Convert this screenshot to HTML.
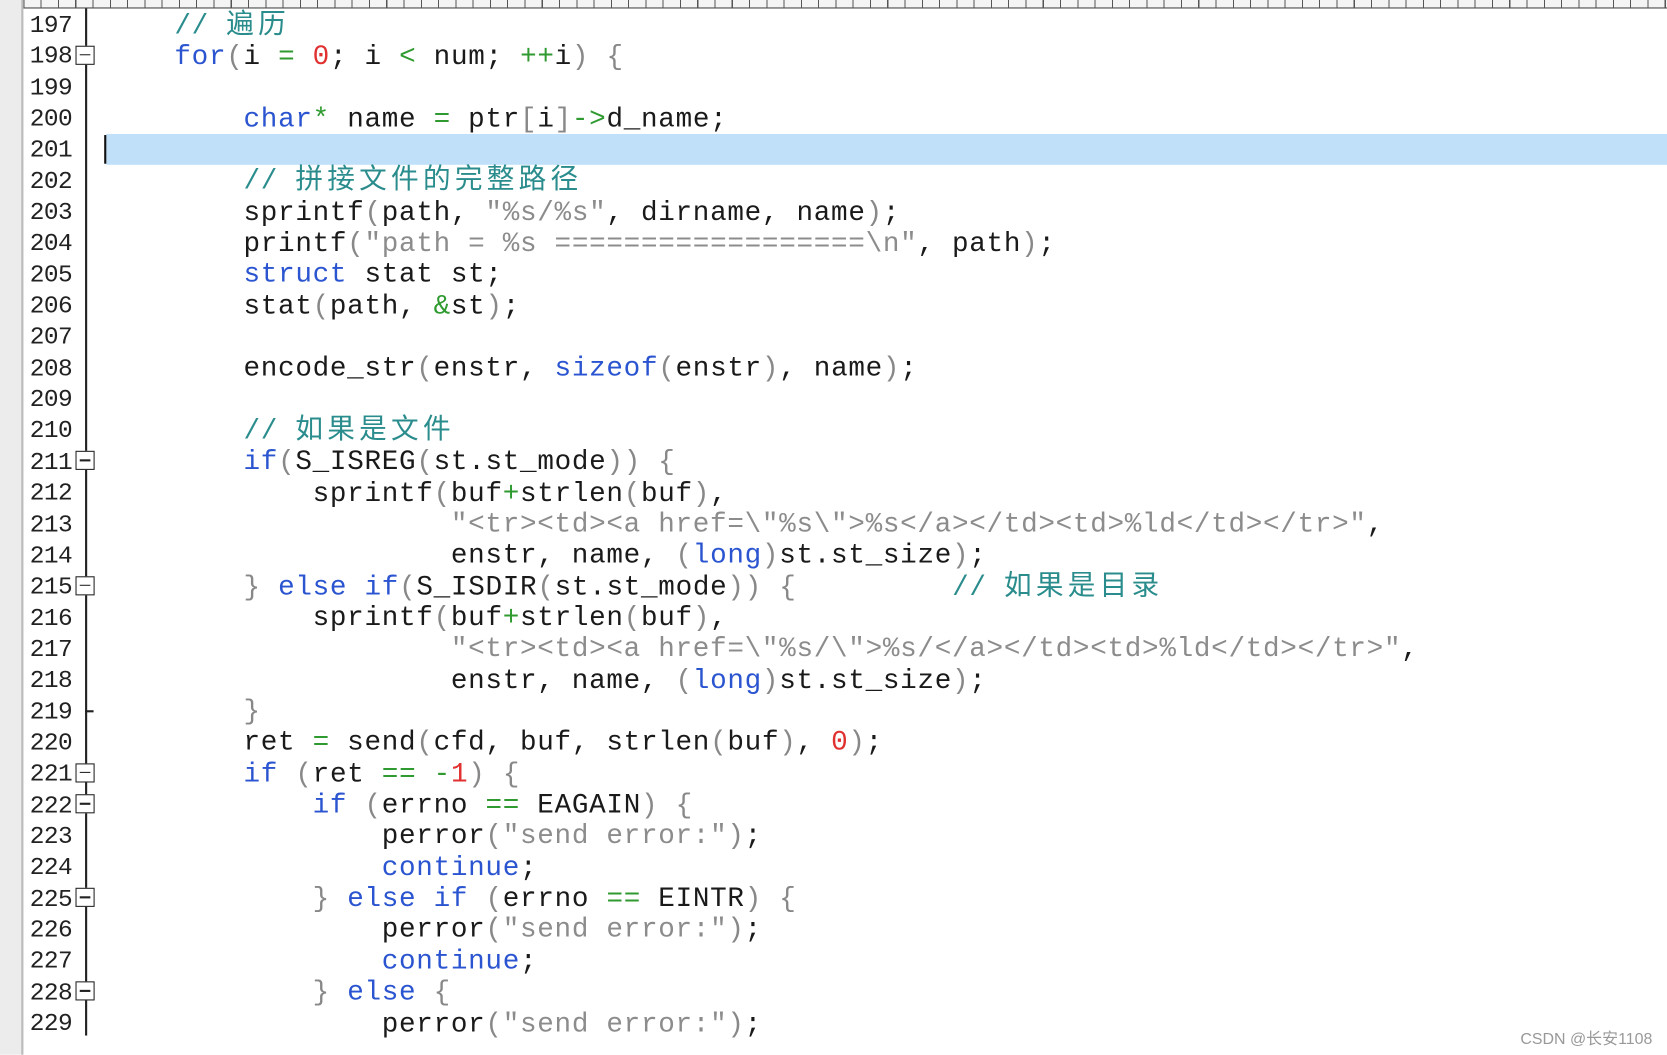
<!DOCTYPE html>
<html><head><meta charset="utf-8"><style>
html,body{margin:0;padding:0;background:#fff;width:1667px;height:1055px;overflow:hidden}
#w{position:absolute;left:0;top:0;width:1568px;height:992px;transform:scale(1.0632);transform-origin:0 0;background:#fff}
.ruler{position:absolute;left:22px;top:0;width:1546px;height:7px;background:#f4f4f4;border-bottom:1px solid #444;
 background-image:repeating-linear-gradient(90deg,#555 0 1px,transparent 1px 16.25px)}
.lstrip{position:absolute;left:0;top:0;width:20px;height:992px;background:#ececec;border-right:2px solid #bbb}
.fl{position:absolute;left:80px;top:8px;width:1.5px;height:966px;background:#222}
.hl{position:absolute;left:100px;top:126px;width:1468px;height:29px;background:#bfe0f8}
.cur{position:absolute;left:98px;top:127px;width:2px;height:27px;background:#111}
.nums{position:absolute;left:28px;top:10px;margin:0;font:23px/29.35px "Liberation Mono",monospace;color:#222;letter-spacing:-0.5px}
.fb{position:absolute;left:71px;width:18px;height:18px;border:1.5px solid #222;background:#fff;box-sizing:border-box}
.fb:after{content:"";position:absolute;left:3px;right:3px;top:6.75px;height:1.5px;background:#222}
.code{position:absolute;left:99px;top:9.5px;margin:0;font:26px/29.35px "Liberation Mono",monospace;letter-spacing:0.65px;color:#1a1a1a;white-space:pre}
.k{color:#2b55d0}.c{color:#2a8c8c}.s{color:#8c8c8c}.n{color:#e03030}.o{color:#2f9a2f}.p{color:#888}
.cj{font-family:"Noto Sans CJK SC",sans-serif;letter-spacing:4px;font-size:26px;line-height:20px}
.wm{position:absolute;left:1430px;top:966px;font:15px "Liberation Sans","Noto Sans CJK SC",sans-serif;color:#999}
</style></head><body><div id="w">
<div class="lstrip"></div><div class="ruler"></div>
<div class="hl"></div><div class="fl"></div><div class="cur"></div>
<pre class="nums">197
198
199
200
201
202
203
204
205
206
207
208
209
210
211
212
213
214
215
216
217
218
219
220
221
222
223
224
225
226
227
228
229</pre>
<div class="fb" style="top:42.85px"></div>
<div class="fb" style="top:424.4px"></div>
<div class="fb" style="top:541.8px"></div>
<div class="fb" style="top:717.9px"></div>
<div class="fb" style="top:747.25px"></div>
<div class="fb" style="top:835.3px"></div>
<div class="fb" style="top:923.35px"></div>
<div style="position:absolute;left:80px;top:668.2px;width:8px;height:1.5px;background:#222"></div>
<pre class="code">    <span class="c">// <span class="cj">遍历</span></span>
    <span class="k">for</span><span class="p">(</span>i <span class="o">=</span> <span class="n">0</span>; i <span class="o">&lt;</span> num; <span class="o">++</span>i<span class="p">)</span> <span class="p">{</span>

        <span class="k">char</span><span class="o">*</span> name <span class="o">=</span> ptr<span class="p">[</span>i<span class="p">]</span><span class="o">-&gt;</span>d_name;

        <span class="c">// <span class="cj">拼接文件的完整路径</span></span>
        sprintf<span class="p">(</span>path, <span class="s">"%s/%s"</span>, dirname, name<span class="p">)</span>;
        printf<span class="p">(</span><span class="s">"path = %s ==================\n"</span>, path<span class="p">)</span>;
        <span class="k">struct</span> stat st;
        stat<span class="p">(</span>path, <span class="o">&amp;</span>st<span class="p">)</span>;

        encode_str<span class="p">(</span>enstr, <span class="k">sizeof</span><span class="p">(</span>enstr<span class="p">)</span>, name<span class="p">)</span>;

        <span class="c">// <span class="cj">如果是文件</span></span>
        <span class="k">if</span><span class="p">(</span>S_ISREG<span class="p">(</span>st.st_mode<span class="p">))</span> <span class="p">{</span>
            sprintf<span class="p">(</span>buf<span class="o">+</span>strlen<span class="p">(</span>buf<span class="p">)</span>,
                    <span class="s">"&lt;tr&gt;&lt;td&gt;&lt;a href=\"%s\"&gt;%s&lt;/a&gt;&lt;/td&gt;&lt;td&gt;%ld&lt;/td&gt;&lt;/tr&gt;"</span>,
                    enstr, name, <span class="p">(</span><span class="k">long</span><span class="p">)</span>st.st_size<span class="p">)</span>;
        <span class="p">}</span> <span class="k">else if</span><span class="p">(</span>S_ISDIR<span class="p">(</span>st.st_mode<span class="p">))</span> <span class="p">{</span>         <span class="c">// <span class="cj">如果是目录</span></span>
            sprintf<span class="p">(</span>buf<span class="o">+</span>strlen<span class="p">(</span>buf<span class="p">)</span>,
                    <span class="s">"&lt;tr&gt;&lt;td&gt;&lt;a href=\"%s/\"&gt;%s/&lt;/a&gt;&lt;/td&gt;&lt;td&gt;%ld&lt;/td&gt;&lt;/tr&gt;"</span>,
                    enstr, name, <span class="p">(</span><span class="k">long</span><span class="p">)</span>st.st_size<span class="p">)</span>;
        <span class="p">}</span>
        ret <span class="o">=</span> send<span class="p">(</span>cfd, buf, strlen<span class="p">(</span>buf<span class="p">)</span>, <span class="n">0</span><span class="p">)</span>;
        <span class="k">if</span> <span class="p">(</span>ret <span class="o">==</span> <span class="o">-</span><span class="n">1</span><span class="p">)</span> <span class="p">{</span>
            <span class="k">if</span> <span class="p">(</span>errno <span class="o">==</span> EAGAIN<span class="p">)</span> <span class="p">{</span>
                perror<span class="p">(</span><span class="s">"send error:"</span><span class="p">)</span>;
                <span class="k">continue</span>;
            <span class="p">}</span> <span class="k">else if</span> <span class="p">(</span>errno <span class="o">==</span> EINTR<span class="p">)</span> <span class="p">{</span>
                perror<span class="p">(</span><span class="s">"send error:"</span><span class="p">)</span>;
                <span class="k">continue</span>;
            <span class="p">}</span> <span class="k">else</span> <span class="p">{</span>
                perror<span class="p">(</span><span class="s">"send error:"</span><span class="p">)</span>;</pre>
<div class="wm">CSDN @长安1108</div>
</div>
</body></html>
